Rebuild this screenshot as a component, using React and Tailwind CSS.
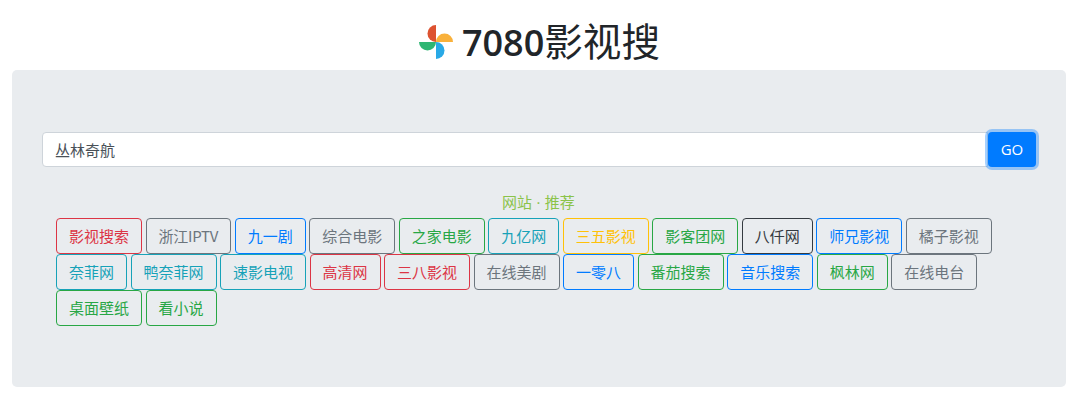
import React from "react";

const FONT = "font-['Open_Sans','Noto_Sans_CJK_SC',sans-serif]";
const CHIP_FONT = "font-['Noto_Sans_CJK_SC',sans-serif]";

const colors = {
  danger: "border-[#dc3545] text-[#dc3545]",
  secondary: "border-[#6c757d] text-[#6c757d]",
  primary: "border-[#007bff] text-[#007bff]",
  success: "border-[#28a745] text-[#28a745]",
  info: "border-[#17a2b8] text-[#17a2b8]",
  warning: "border-[#ffc107] text-[#ffc107]",
  dark: "border-[#343a40] text-[#343a40]",
};

const sites = [
  ["影视搜索", "danger"],
  ["浙江IPTV", "secondary", "tracking-[-0.25px]"],
  ["九一剧", "primary"],
  ["综合电影", "secondary"],
  ["之家电影", "success"],
  ["九亿网", "info"],
  ["三五影视", "warning"],
  ["影客团网", "success"],
  ["八仟网", "dark"],
  ["师兄影视", "primary"],
  ["橘子影视", "secondary"],
  ["奈菲网", "info"],
  ["鸭奈菲网", "info"],
  ["速影电视", "info"],
  ["高清网", "danger"],
  ["三八影视", "danger"],
  ["在线美剧", "secondary"],
  ["一零八", "primary"],
  ["番茄搜索", "success"],
  ["音乐搜索", "primary"],
  ["枫林网", "success"],
  ["在线电台", "secondary"],
  ["桌面壁纸", "success"],
  ["看小说", "success"],
];

const Logo = () => (
  <svg width="34" height="34" viewBox="0 0 34 34" className="shrink-0">
    <path d="M17 0A8.5 8.5 0 0 0 17 17Z" fill="#dd5230" />
    <path d="M17 17A8.5 8.5 0 0 1 34 17Z" fill="#f9b13b" />
    <path d="M17 17A8.5 8.5 0 0 1 17 34Z" fill="#29a9e6" />
    <path d="M0 17A8.5 8.5 0 0 0 17 17Z" fill="#2fb673" />
  </svg>
);

const App = () => {
  return (
    <div className={`${FONT} h-[403px] w-[1080px] overflow-hidden bg-white`}>
      <div className="flex h-[70px] items-center justify-center pt-[13px] pr-[1px]">
        <Logo />
        <h1 className="ml-[9px] text-[38.6px] leading-[57px] font-normal text-[#212529]">
          <span className="text-[36px] font-semibold">7080</span>
          <span>影视搜</span>
        </h1>
      </div>
      <div className="ml-3 h-[317px] w-[1054px] rounded-[5px] bg-[#e9ecef] px-[30px] pt-[62px]">
        <div className="flex h-[35px]">
          <input
            type="text"
            defaultValue="丛林奇航"
            className="h-[35px] min-w-0 flex-1 rounded-l-[4px] border border-[#ced4da] bg-white px-3 text-[15px] text-[#495057] outline-none"
          />
          <button className="h-[35px] w-[48px] rounded-[4px] bg-[#007bff] text-[15px] text-white shadow-[0_0_0_3px_rgba(0,123,255,0.35)]">
            GO
          </button>
        </div>
        <div className="mt-[24px] pr-[1px] text-center text-[15px] leading-[22px] tracking-[0.2px] text-[#8bc34a]">网站 · 推荐</div>
        <div className={`${CHIP_FONT} mt-[5px] flex flex-wrap gap-x-[3.5px] pl-[14px]`}>
          {sites.map(([name, color, extra]) => (
            <a
              key={name}
              href="#"
              className={`h-[36px] rounded-[4px] border px-3 text-[15px] leading-[34px] ${colors[color]} ${extra || ""}`}
            >
              {name}
            </a>
          ))}
        </div>
      </div>
    </div>
  );
};

export default App;
